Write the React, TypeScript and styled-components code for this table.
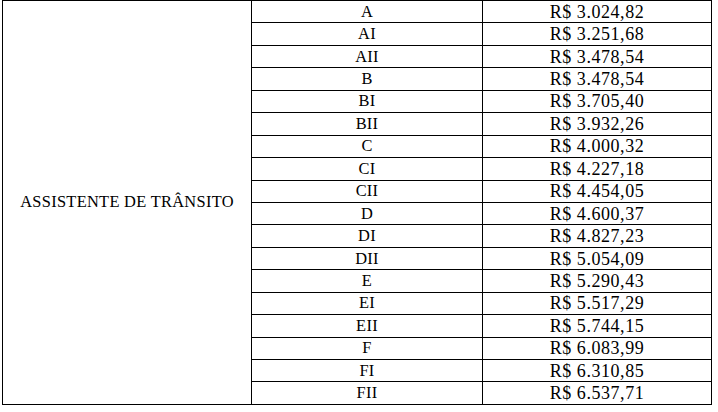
import styled, { createGlobalStyle } from 'styled-components';

const GlobalStyle = createGlobalStyle`
  html, body {
    margin: 0;
    padding: 0;
    background: #ffffff;
  }
  body {
    font-family: 'Liberation Serif', 'Times New Roman', serif;
    color: #000000;
  }
`;

const Page = styled.div`
  width: 718px;
  height: 412px;
  padding-left: 2px;
  box-sizing: border-box;
  background: #ffffff;
`;

const Table = styled.table`
  border-collapse: collapse;
  table-layout: fixed;
  width: 710px;
  font-family: 'Liberation Serif', 'Times New Roman', serif;
`;

const Row = styled.tr`
  height: 22.45px;
`;

const Cell = styled.td<{ $variant?: 'cargo' | 'nivel' | 'valor' }>`
  border: 1px solid #000000;
  padding: 0;
  text-align: center;
  vertical-align: middle;
  line-height: 18px;
  color: #000000;
  font-size: ${({ $variant }) => ($variant === 'valor' ? '18px' : '16.4px')};
  letter-spacing: ${({ $variant }) => ($variant === 'valor' ? '0.55px' : '0.3px')};
  white-space: nowrap;
`;

const rows: [string, string][] = [
  ['A', 'R$ 3.024,82'],
  ['AI', 'R$ 3.251,68'],
  ['AII', 'R$ 3.478,54'],
  ['B', 'R$ 3.478,54'],
  ['BI', 'R$ 3.705,40'],
  ['BII', 'R$ 3.932,26'],
  ['C', 'R$ 4.000,32'],
  ['CI', 'R$ 4.227,18'],
  ['CII', 'R$ 4.454,05'],
  ['D', 'R$ 4.600,37'],
  ['DI', 'R$ 4.827,23'],
  ['DII', 'R$ 5.054,09'],
  ['E', 'R$ 5.290,43'],
  ['EI', 'R$ 5.517,29'],
  ['EII', 'R$ 5.744,15'],
  ['F', 'R$ 6.083,99'],
  ['FI', 'R$ 6.310,85'],
  ['FII', 'R$ 6.537,71'],
];

const App = () => {
  return (
    <>
      <GlobalStyle />
      <Page>
        <Table>
          <colgroup>
            <col style={{ width: '249px' }} />
            <col style={{ width: '231px' }} />
            <col style={{ width: '229px' }} />
          </colgroup>
          <tbody>
            {rows.map(([nivel, valor], i) => (
              <Row key={nivel}>
                {i === 0 && (
                  <Cell $variant="cargo" rowSpan={rows.length}>
                    ASSISTENTE DE TRÂNSITO
                  </Cell>
                )}
                <Cell $variant="nivel">{nivel}</Cell>
                <Cell $variant="valor">{valor}</Cell>
              </Row>
            ))}
          </tbody>
        </Table>
      </Page>
    </>
  );
};

export default App;
